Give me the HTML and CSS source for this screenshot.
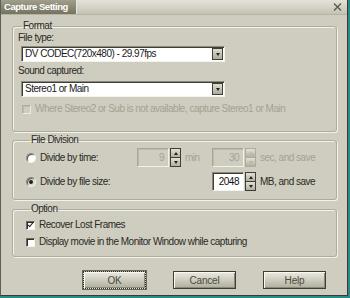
FILE: index.html
```html
<!DOCTYPE html>
<html lang="en">
<head>
    <meta charset="UTF-8">
    <title>Capture Setting</title>
    <link rel="stylesheet" href="styles.css">
</head>
<body>
    <div class="window">
        <!-- Barra de titulo -->
        <div class="titlebar">
            <div class="title-tab">Capture Setting</div>
            <div class="title-fill">
                <svg class="close" width="9" height="8" viewBox="0 0 9 8">
                    <path d="M1 0.5 L8 7.5 M8 0.5 L1 7.5" stroke="#5a5a50" stroke-width="1.4" fill="none"/>
                </svg>
            </div>
        </div>

        <div class="body">
            <!-- Format -->
            <fieldset class="group format">
                <legend>Format</legend>
                <div class="field-label">File type:</div>
                <div class="combo">
                    <span class="combo-text">DV CODEC(720x480) - 29.97fps</span>
                    <span class="combo-btn"><span class="tri-down"></span></span>
                </div>
                <div class="field-label second">Sound captured:</div>
                <div class="combo combo-2">
                    <span class="combo-text">Stereo1 or Main</span>
                    <span class="combo-btn"><span class="tri-down"></span></span>
                </div>
                <div class="check-row disabled indent-small">
                    <span class="box"></span>
                    <span>Where Stereo2 or Sub is not available, capture Stereo1 or Main</span>
                </div>
            </fieldset>

            <!-- File Division -->
            <fieldset class="group division">
                <legend>File Division</legend>
                <div class="division-grid">
                    <div class="radio-row">
                        <span class="radio"></span>
                        <span>Divide by time:</span>
                    </div>
                    <div class="spin disabled">
                        <span class="spin-input">9</span>
                        <span class="spin-btns">
                            <span class="spin-up"><span class="tri-up"></span></span>
                            <span class="spin-down"><span class="tri-down"></span></span>
                        </span>
                    </div>
                    <div class="unit disabled-text">min</div>
                    <div class="spin disabled">
                        <span class="spin-input">30</span>
                        <span class="spin-btns light">
                            <span class="spin-up"><span class="tri-up"></span></span>
                            <span class="spin-down"><span class="tri-down"></span></span>
                        </span>
                    </div>
                    <div class="unit disabled-text">sec, and save</div>

                    <div class="radio-row wide">
                        <span class="radio checked"></span>
                        <span>Divide by file size:</span>
                    </div>
                    <div class="spin">
                        <span class="spin-input">2048</span>
                        <span class="spin-btns">
                            <span class="spin-up"><span class="tri-up"></span></span>
                            <span class="spin-down"><span class="tri-down"></span></span>
                        </span>
                    </div>
                    <div class="unit">MB, and save</div>
                </div>
            </fieldset>

            <!-- Option -->
            <fieldset class="group option">
                <legend>Option</legend>
                <div class="check-row">
                    <span class="box checked"></span>
                    <span>Recover Lost Frames</span>
                </div>
                <div class="check-row">
                    <span class="box"></span>
                    <span>Display movie in the Monitor Window while capturing</span>
                </div>
            </fieldset>

            <div class="buttons">
                <button class="btn default">OK</button>
                <button class="btn">Cancel</button>
                <button class="btn">Help</button>
            </div>
        </div>
    </div>
</body>
</html>
```

FILE: styles.css
```css
body {
    margin: 0;
    background: #2a8a8a;
    font-family: "Liberation Sans", Arial, sans-serif;
    font-size: 10px;
    letter-spacing: -0.5px;
    line-height: 12px;
    color: #2a2a26;
}
.window {
    width: 348px;
    height: 296px;
    box-sizing: border-box;
    background: #cfcdbf;
    border-left: 1px solid #5e5e54;
    border-right: 1px solid #3a3a32;
    border-bottom: 1px solid #3a3a32;
}

/* Barra de titulo */
.titlebar {
    display: flex;
    height: 14px;
    border-bottom: 1px solid #b4b3a4;
}
.title-tab {
    width: 76px;
    padding-left: 3px;
    box-sizing: border-box;
    background: linear-gradient(#a19f8c, #74735f);
    color: #fff;
    font-weight: bold;
    font-size: 9.5px;
    letter-spacing: -0.45px;
    line-height: 14px;
    white-space: nowrap;
    border-right: 1px solid #e6e6dc;
}
.title-fill {
    flex: 1;
    display: flex;
    justify-content: flex-end;
    align-items: center;
    padding-right: 5px;
    background: linear-gradient(#e4e3d8, #c4c3b3);
}

.body {
    padding: 5px 10px 0 11px;
}

/* Grupos */
.group {
    margin: 0;
    border: 1px solid #aeac9e;
    border-radius: 3px;
    box-shadow: inset 1px 1px #f2f1ea, 1px 1px #f2f1ea;
    min-width: 0;
}
.group legend {
    padding: 0 1px;
    margin-left: 4px;
    line-height: 12px;
}
.format {
    padding: 0 8px 16px 5px;
}
.division {
    margin-top: 2px;
    padding: 2px 8px 8px 13px;
}
.option {
    margin-top: 3px;
    padding: 4px 8px 8px 13px;
}

.field-label.second {
    margin-top: 3px;
}

/* Combos */
.combo {
    display: flex;
    width: 204px;
    height: 16px;
    margin: 2px 0 0 3px;
    box-sizing: border-box;
    background: #fff;
    border: 1px solid;
    border-color: #8a897a #f4f4ee #f4f4ee #8a897a;
    box-shadow: inset 1px 1px #3e3e36;
}
.combo-2 {
    margin-top: 4px;
}
.combo-text {
    flex: 1;
    padding: 1px 0 0 3px;
    color: #1a1a18;
}
.combo-btn {
    width: 11px;
    margin: 1px 1px 1px 0;
    display: flex;
    align-items: center;
    justify-content: center;
    background: linear-gradient(#dedccf, #aeac9c);
    border: 1px solid #3e3e36;
    box-sizing: border-box;
}
.tri-down, .tri-up {
    width: 0;
    height: 0;
    border-left: 2.5px solid transparent;
    border-right: 2.5px solid transparent;
}
.tri-down {
    border-top: 3px solid #222;
}
.tri-up {
    border-bottom: 3px solid #222;
}

/* Casillas */
.check-row, .radio-row {
    display: flex;
    align-items: center;
    gap: 4px;
    height: 12px;
}
.check-row + .check-row {
    margin-top: 5px;
}
.indent-small {
    margin: 6px 0 0 4px;
}
.box {
    flex: none;
    width: 7px;
    height: 7px;
    background: #fff;
    border: 1px solid;
    border-color: #6a6a5e #f4f4ee #f4f4ee #6a6a5e;
    box-shadow: inset 1px 1px #2e2e28;
    position: relative;
}
.box.checked::after {
    content: "";
    position: absolute;
    left: 2px;
    top: -1px;
    width: 2px;
    height: 5px;
    border: solid #222;
    border-width: 0 1.5px 1.5px 0;
    transform: rotate(40deg);
}
.disabled {
    color: #a3a293;
}
.check-row.disabled .box {
    background: #cfcdbf;
    border-color: #b0ae9f #ecebe4 #ecebe4 #b0ae9f;
    box-shadow: inset 1px 1px #bdbbad;
}
.radio {
    flex: none;
    width: 8px;
    height: 8px;
    border-radius: 50%;
    background: #fff;
    box-shadow: inset 1px 1px #5a5a50;
    border: 1px solid;
    border-color: #8a897a #f4f4ee #f4f4ee #8a897a;
    position: relative;
}
.radio.checked {
    background: #dcdbd0;
}
.radio.checked::after {
    content: "";
    position: absolute;
    left: 2px;
    top: 2px;
    width: 4px;
    height: 4px;
    border-radius: 50%;
    background: #222;
}

/* File Division */
.division-grid {
    display: grid;
    grid-template-columns: 111px 44px 31px 44px 1fr;
    grid-template-rows: 19px 19px;
    row-gap: 5px;
    align-items: center;
}
.radio-row.wide {
    grid-column: 1 / 4;
    margin-right: 1px;
}
.spin {
    display: flex;
    height: 19px;
    gap: 1px;
}
.spin-input {
    width: 32px;
    box-sizing: border-box;
    background: #fff;
    border: 1px solid;
    border-color: #8a897a #f4f4ee #f4f4ee #8a897a;
    box-shadow: inset 1px 1px #3e3e36;
    text-align: right;
    padding: 3px 4px 0 0;
    color: #111;
}
.spin.disabled .spin-input {
    background: #cfcdbf;
    color: #a3a293;
    border-color: #a8a698 #f2f1ea #f2f1ea #a8a698;
    box-shadow: inset 1px 1px #bcbaac;
}
.spin-btns {
    width: 11px;
    display: flex;
    flex-direction: column;
    border: 1px solid #3e3e36;
    box-sizing: border-box;
}
.spin-btns.light {
    border-color: #aeac9e;
}
.spin-up, .spin-down {
    flex: 1;
    display: flex;
    align-items: center;
    justify-content: center;
    background: linear-gradient(#e2e0d4, #b2b0a0);
}
.spin-up {
    border-bottom: 1px solid #3e3e36;
}
.spin-btns.light .spin-up {
    border-bottom-color: #aeac9e;
}
.spin-btns.light .tri-up {
    border-bottom-color: #b8b6a8;
}
.spin-btns.light .tri-down {
    border-top-color: #b8b6a8;
}
.unit {
    padding-left: 4px;
}
.disabled-text {
    color: #a3a293;
}

/* Botones */
.buttons {
    display: flex;
    gap: 27px;
    margin-top: 14px;
    padding-left: 71px;
}
.btn {
    width: 63px;
    height: 18px;
    padding: 0;
    font-family: inherit;
    font-size: 10px;
    letter-spacing: -0.2px;
    color: #4a4a40;
    background: linear-gradient(#eceae0, #c8c6b6 60%, #b0ae9e);
    border: 1px solid #3e3e36;
    box-shadow: inset 1px 1px #fafaf4, inset -1px -1px #8a897a;
}
.btn.default {
    border: 1px dotted #2e2e28;
    outline: 1px solid #6a6a5e;
}
```
